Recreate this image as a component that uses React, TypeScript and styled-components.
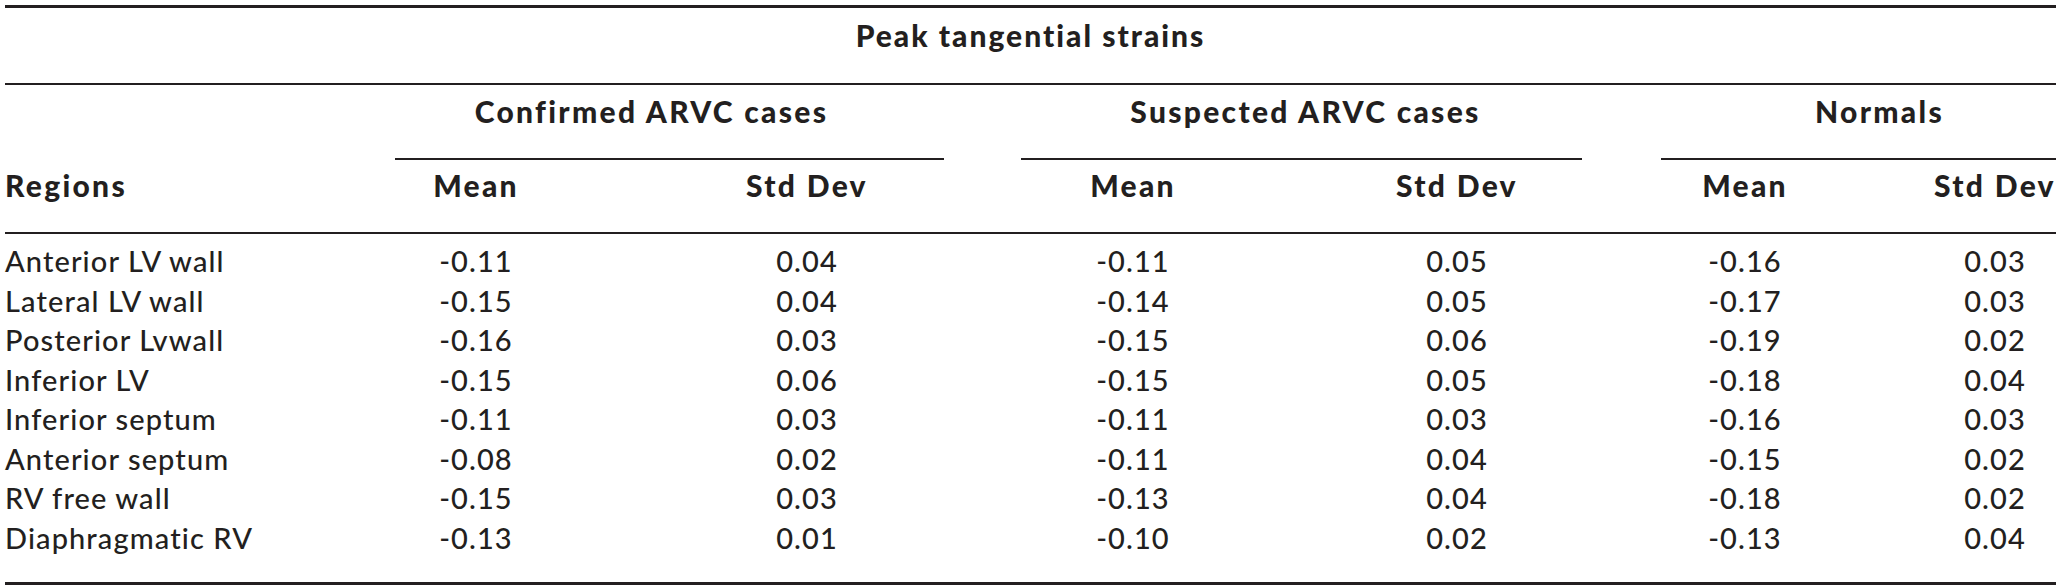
import React from 'react'
import styled, { createGlobalStyle } from 'styled-components'

const GlobalStyle = createGlobalStyle`
  body {
    margin: 0;
    background: #ffffff;
    color: #231f20;
    font-family: Lato, "Liberation Sans", sans-serif;
  }
`

const COLUMNS = '241px 460px 202px 450px 198px 378px 122px'
const LINE = '39.5px'

const Table = styled.div`
  width: 2051px;
  margin-left: 5px;
  padding-top: 5px;
`

const TitleBand = styled.div`
  border-top: 3px solid #231f20;
  border-bottom: 2px solid #231f20;
  padding: 8px 0 27.5px;
  text-align: center;
  font-size: 30px;
  font-weight: 900;
  letter-spacing: 2px;
  line-height: ${LINE};
`

const HeadGrid = styled.div`
  display: grid;
  grid-template-columns: ${COLUMNS};
  row-gap: 6px;
  padding: 7px 0 26.5px;
  border-bottom: 2px solid #231f20;
  font-size: 30px;
  font-weight: 900;
  letter-spacing: 2.3px;
  line-height: ${LINE};
`

const GroupCell = styled.div`
  grid-column: span 2;
`

const GroupLabel = styled.div<{ $left: number; $right: number; $shift: number }>`
  margin-left: ${p => p.$left}px;
  margin-right: ${p => p.$right}px;
  padding-left: ${p => Math.max(p.$shift, 0) * 2}px;
  padding-right: ${p => Math.max(-p.$shift, 0) * 2}px;
  padding-bottom: 26.5px;
  border-bottom: 2px solid #231f20;
  text-align: center;
  white-space: nowrap;
`

const Cell = styled.div<{ $first?: boolean }>`
  text-align: ${p => (p.$first ? 'left' : 'center')};
  white-space: nowrap;
`

const BodyGrid = styled.div`
  display: grid;
  grid-template-columns: ${COLUMNS};
  grid-auto-rows: ${LINE};
  padding: 7px 0 25px;
  border-bottom: 3px solid #231f20;
  font-size: 29px;
  font-weight: 500;
  letter-spacing: 1.1px;
  line-height: ${LINE};
`

const groups = [
  { label: 'Confirmed ARVC cases', left: 149, right: -36, shift: -18 },
  { label: 'Suspected ARVC cases', left: 113, right: -26, shift: 4 },
  { label: 'Normals', left: 105, right: 0, shift: 21 },
]

const headers = ['Regions', 'Mean', 'Std Dev', 'Mean', 'Std Dev', 'Mean', 'Std Dev']

const rows = [
  ['Anterior LV wall', '-0.11', '0.04', '-0.11', '0.05', '-0.16', '0.03'],
  ['Lateral LV wall', '-0.15', '0.04', '-0.14', '0.05', '-0.17', '0.03'],
  ['Posterior Lvwall', '-0.16', '0.03', '-0.15', '0.06', '-0.19', '0.02'],
  ['Inferior LV', '-0.15', '0.06', '-0.15', '0.05', '-0.18', '0.04'],
  ['Inferior septum', '-0.11', '0.03', '-0.11', '0.03', '-0.16', '0.03'],
  ['Anterior septum', '-0.08', '0.02', '-0.11', '0.04', '-0.15', '0.02'],
  ['RV free wall', '-0.15', '0.03', '-0.13', '0.04', '-0.18', '0.02'],
  ['Diaphragmatic RV', '-0.13', '0.01', '-0.10', '0.02', '-0.13', '0.04'],
]

function App() {
  return (
    <>
      <GlobalStyle />
      <Table>
        <TitleBand>Peak tangential strains</TitleBand>
        <HeadGrid>
          <div />
          {groups.map(g => (
            <GroupCell key={g.label}>
              <GroupLabel $left={g.left} $right={g.right} $shift={g.shift}>
                {g.label}
              </GroupLabel>
            </GroupCell>
          ))}
          {headers.map((h, i) => (
            <Cell key={i} $first={i === 0}>{h}</Cell>
          ))}
        </HeadGrid>
        <BodyGrid>
          {rows.map(row =>
            row.map((v, i) => (
              <Cell key={row[0] + i} $first={i === 0}>{v}</Cell>
            ))
          )}
        </BodyGrid>
      </Table>
    </>
  )
}

export default App
